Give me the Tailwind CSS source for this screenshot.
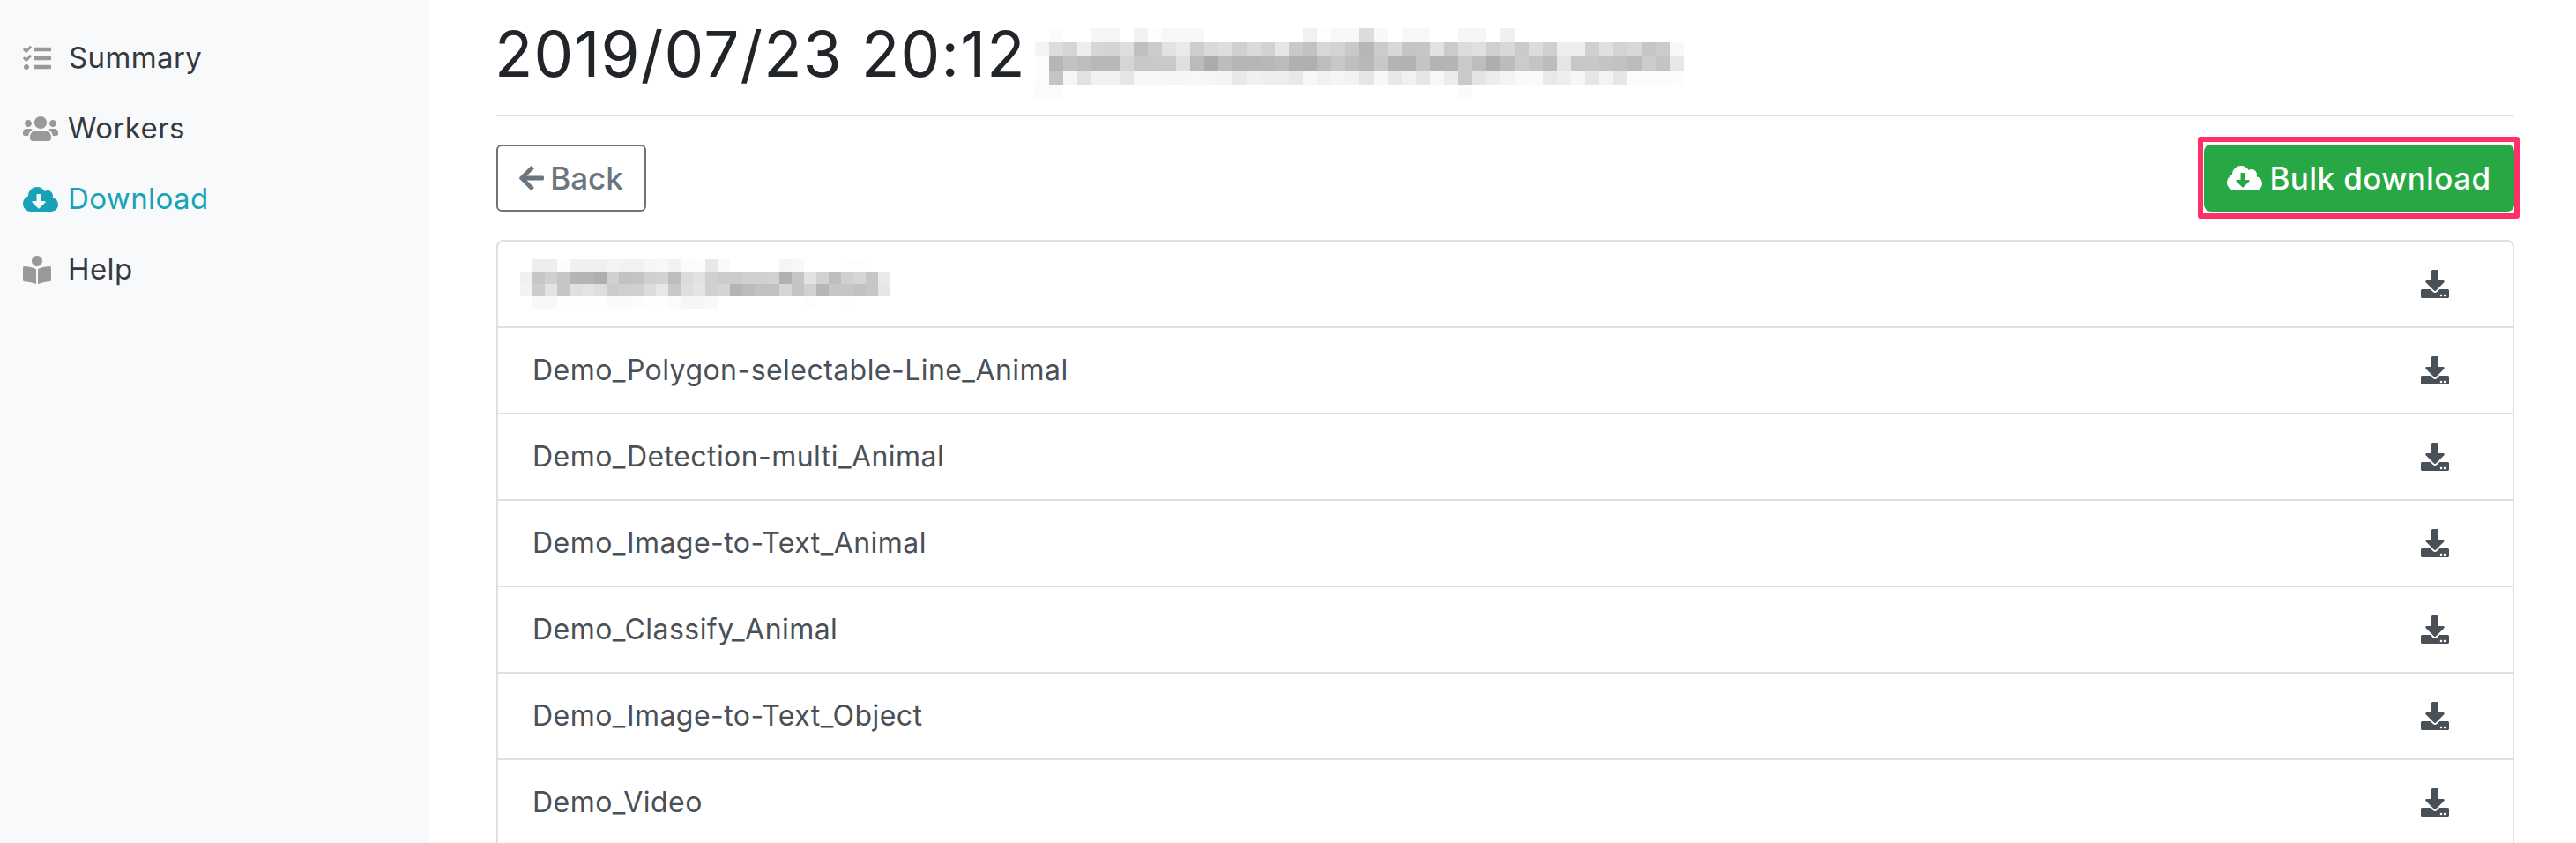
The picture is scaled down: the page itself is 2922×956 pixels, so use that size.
<!DOCTYPE html>
<html>
<head>
<meta charset="utf-8">
<script src="https://cdn.jsdelivr.net/npm/@tailwindcss/browser@4"></script>
</head>
<body class="bg-white font-['Inter','Liberation_Sans',sans-serif]">
<div class="flex h-[956px] w-[2922px] overflow-hidden">
  <aside class="w-[485px] shrink-0 bg-[#f8f9fa] shadow-[1px_0_4px_rgba(0,0,0,0.04)] pt-[26px] pl-[26px] text-[33px] tracking-[0.4px] text-[#343a40]">
    <a class="flex h-[80px] items-center gap-[20px]">
      <span class="flex w-[32px] justify-start"><svg class="w-[32px] h-[32px] fill-[#999]" viewBox="0 0 512 512"><path d="M208 132h288c8.8 0 16-7.2 16-16V76c0-8.8-7.2-16-16-16H208c-8.8 0-16 7.2-16 16v40c0 8.8 7.2 16 16 16zm0 160h288c8.8 0 16-7.2 16-16v-40c0-8.8-7.2-16-16-16H208c-8.8 0-16 7.2-16 16v40c0 8.8 7.2 16 16 16zm0 160h288c8.8 0 16-7.2 16-16v-40c0-8.8-7.2-16-16-16H208c-8.8 0-16 7.2-16 16v40c0 8.8 7.2 16 16 16zM64 368c-26.5 0-48.6 21.5-48.6 48s22.1 48 48.6 48 48-21.5 48-48-21.5-48-48-48zm92.5-299l-72.2 72.2-15.6 15.6c-4.7 4.7-12.9 4.7-17.6 0L3.5 109.4c-4.7-4.7-4.7-12.3 0-17l15.7-15.7c4.7-4.7 12.3-4.7 17 0l22.7 22.1 63.7-63.3c4.7-4.7 12.3-4.7 17 0l17 16.5c4.6 4.7 4.6 12.3-.1 17zm0 159.6l-72.2 72.2-15.7 15.7c-4.7 4.7-12.9 4.7-17.6 0L3.5 269c-4.7-4.7-4.7-12.3 0-17l15.7-15.7c4.7-4.7 12.3-4.7 17 0l22.7 22.1 63.7-63.7c4.7-4.7 12.3-4.7 17 0l17 17c4.6 4.6 4.6 12.2-.1 16.9z"/></svg></span>
      <span>Summary</span>
    </a>
    <a class="flex h-[80px] items-center gap-[11px]">
      <svg class="w-[40px] h-[32px] fill-[#999]" viewBox="0 0 640 512"><path d="M96 224c35.3 0 64-28.7 64-64s-28.7-64-64-64-64 28.7-64 64 28.7 64 64 64zm448 0c35.3 0 64-28.7 64-64s-28.7-64-64-64-64 28.7-64 64 28.7 64 64 64zm32 32h-64c-17.6 0-33.5 7.1-45.1 18.6 40.3 22.1 68.9 62 75.1 109.4h66c17.7 0 32-14.3 32-32v-32c0-35.3-28.7-64-64-64zm-256 0c61.9 0 112-50.1 112-112S381.9 32 320 32 208 82.1 208 144s50.1 112 112 112zm76.8 32h-8.3c-20.8 10-43.9 16-68.5 16s-47.6-6-68.5-16h-8.3C179.6 288 128 339.6 128 403.2V432c0 26.5 21.5 48 48 48h288c26.5 0 48-21.5 48-48v-28.8c0-63.6-51.6-115.2-115.2-115.2zm-223.7-13.4C161.5 263.1 145.6 256 128 256H64c-35.3 0-64 28.7-64 64v32c0 17.7 14.3 32 32 32h65.9c6.3-47.4 34.9-87.3 75.2-109.4z"/></svg>
      <span>Workers</span>
    </a>
    <a class="flex h-[80px] items-center gap-[11px] text-[#17a2b8]">
      <svg class="w-[40px] h-[32px] fill-[#17a2b8]" viewBox="0 0 640 512"><path d="M537.6 226.6c4.1-10.7 6.4-22.4 6.4-34.6 0-53-43-96-96-96-19.7 0-38.1 6-53.3 16.2C367 64.2 315.3 32 256 32c-88.4 0-160 71.6-160 160 0 2.7.1 5.4.2 8.1C40.2 219.8 0 273.2 0 336c0 79.5 64.5 144 144 144h368c70.7 0 128-57.3 128-128 0-61.9-44-113.6-102.4-125.4zm-132.9 88.7L299.3 420.7c-6.2 6.2-16.4 6.2-22.6 0L171.3 315.3c-10.1-10.1-2.9-27.3 11.3-27.3H248V176c0-8.8 7.2-16 16-16h48c8.8 0 16 7.2 16 16v112h65.4c14.2 0 21.4 17.2 11.3 27.3z"/></svg>
      <span>Download</span>
    </a>
    <a class="flex h-[80px] items-center gap-[19px]">
      <svg class="w-[32px] h-[32px] fill-[#999]" viewBox="0 0 512 512"><path d="M352 96c0-53.02-42.98-96-96-96s-96 42.98-96 96 42.98 96 96 96 96-42.98 96-96zM233.59 241.1c-59.33-36.32-155.43-46.3-203.79-49.05C13.55 191.13 0 203.51 0 219.14v222.8c0 14.33 11.59 26.28 26.49 27.05 43.66 2.29 131.99 10.68 193.04 41.43 9.37 4.72 20.48-1.71 20.48-11.87V252.56c-.01-4.67-2.32-8.95-6.42-11.46zm248.61-49.05c-48.35 2.74-144.46 12.73-203.78 49.05-4.1 2.51-6.41 6.96-6.41 11.63v245.79c0 10.19 11.14 16.63 20.54 11.9 61.04-30.72 149.32-39.11 192.97-41.4 14.9-.78 26.49-12.73 26.49-27.06V219.14c-.01-15.63-13.56-28.01-29.81-27.09z"/></svg>
      <span>Help</span>
    </a>
  </aside>
  <main class="ml-[78px] w-[2289px] shrink-0">
    <header class="flex h-[132px] items-start border-b-2 border-[#dee2e6]">
      <h1 class="mt-[19px] h-[84px] -ml-[2px] text-[71px] leading-[84px] tracking-[1.2px] font-normal text-[#212529]">2019/07/23 20:12</h1>
      <svg id="m1" class="mt-[32px] ml-[10px]" width="752" height="80" shape-rendering="crispEdges"></svg>
    </header>
    <div class="flex items-start justify-between mt-[32px]">
      <button class="flex h-[76px] w-[170px] items-center justify-center gap-[7px] rounded-[6px] border-2 border-[#6c757d] bg-white text-[35px] font-medium text-[#6c757d]">
        <svg class="w-[28px] h-[32px] fill-[#6c757d]" viewBox="0 0 448 512"><path d="M257.5 445.1l-22.2 22.2c-9.4 9.4-24.6 9.4-33.9 0L7 273c-9.4-9.4-9.4-24.6 0-33.9L201.4 44.7c9.4-9.4 24.6-9.4 33.9 0l22.2 22.2c9.5 9.5 9.3 25-.4 34.3L136.6 216H424c13.3 0 24 10.7 24 24v32c0 13.3-10.7 24-24 24H136.6l120.5 114.8c9.8 9.3 10 24.8.4 34.3z"/></svg>
        <span>Back</span>
      </button>
      <button class="relative flex h-[76px] w-[352px] items-center justify-center gap-[8px] rounded-[8px] bg-[#28a745] text-[35px] font-medium tracking-[0.4px] text-white">
        <svg class="w-[40px] h-[32px] fill-white" viewBox="0 0 640 512"><path d="M537.6 226.6c4.1-10.7 6.4-22.4 6.4-34.6 0-53-43-96-96-96-19.7 0-38.1 6-53.3 16.2C367 64.2 315.3 32 256 32c-88.4 0-160 71.6-160 160 0 2.7.1 5.4.2 8.1C40.2 219.8 0 273.2 0 336c0 79.5 64.5 144 144 144h368c70.7 0 128-57.3 128-128 0-61.9-44-113.6-102.4-125.4zm-132.9 88.7L299.3 420.7c-6.2 6.2-16.4 6.2-22.6 0L171.3 315.3c-10.1-10.1-2.9-27.3 11.3-27.3H248V176c0-8.8 7.2-16 16-16h48c8.8 0 16 7.2 16 16v112h65.4c14.2 0 21.4 17.2 11.3 27.3z"/></svg>
        <span>Bulk download</span>
        <span class="absolute top-[-9px] bottom-[-8px] left-[-7px] right-[-6px] rounded-[3px] border-[6px] border-[#ff3069]"></span>
      </button>
    </div>
    <ul class="mt-[32px] rounded-t-[8px] border-2 border-[#dfdfdf] text-[32px] leading-[46px] tracking-[0.45px] text-[#495057]">
      <li class="flex h-[96px] items-center justify-between pl-[39px] pr-[72px]">
        <svg id="m2" class="-ml-[14px]" width="420" height="56" shape-rendering="crispEdges"></svg>
        <svg class="w-[32px] h-[32px] fill-[#495057]" viewBox="0 0 512 512"><use href="#dl"/></svg>
      </li>
      <li class="flex h-[98px] items-center justify-between border-t-2 border-[#dfdfdf] pl-[39px] pr-[72px]"><span>Demo_Polygon-selectable-Line_Animal</span><svg class="w-[32px] h-[32px] fill-[#495057]" viewBox="0 0 512 512"><use href="#dl"/></svg></li>
      <li class="flex h-[98px] items-center justify-between border-t-2 border-[#dfdfdf] pl-[39px] pr-[72px]"><span>Demo_Detection-multi_Animal</span><svg class="w-[32px] h-[32px] fill-[#495057]" viewBox="0 0 512 512"><use href="#dl"/></svg></li>
      <li class="flex h-[98px] items-center justify-between border-t-2 border-[#dfdfdf] pl-[39px] pr-[72px]"><span>Demo_Image-to-Text_Animal</span><svg class="w-[32px] h-[32px] fill-[#495057]" viewBox="0 0 512 512"><use href="#dl"/></svg></li>
      <li class="flex h-[98px] items-center justify-between border-t-2 border-[#dfdfdf] pl-[39px] pr-[72px]"><span>Demo_Classify_Animal</span><svg class="w-[32px] h-[32px] fill-[#495057]" viewBox="0 0 512 512"><use href="#dl"/></svg></li>
      <li class="flex h-[98px] items-center justify-between border-t-2 border-[#dfdfdf] pl-[39px] pr-[72px]"><span>Demo_Image-to-Text_Object</span><svg class="w-[32px] h-[32px] fill-[#495057]" viewBox="0 0 512 512"><use href="#dl"/></svg></li>
      <li class="flex h-[98px] items-center justify-between border-t-2 border-[#dfdfdf] pl-[39px] pr-[72px]"><span>Demo_Video</span><svg class="w-[32px] h-[32px] fill-[#495057]" viewBox="0 0 512 512"><use href="#dl"/></svg></li>
    </ul>
  </main>
</div>
<svg class="hidden"><symbol id="dl" viewBox="0 0 512 512"><path d="M216 0h80c13.3 0 24 10.7 24 24v168h87.7c17.8 0 26.7 21.5 14.1 34.1L269.7 378.3c-7.5 7.5-19.8 7.5-27.3 0L90.1 226.1c-12.6-12.6-3.7-34.1 14.1-34.1H192V24c0-13.3 10.7-24 24-24zm296 376v112c0 13.3-10.7 24-24 24H24c-13.3 0-24-10.7-24-24V376c0-13.3 10.7-24 24-24h146.7l49 49c20.1 20.1 52.5 20.1 72.6 0l49-49H488c13.3 0 24 10.7 24 24zm-124 88c0-11-9-20-20-20s-20 9-20 20 9 20 20 20 20-9 20-20zm64 0c0-11-9-20-20-20s-20 9-20 20 9 20 20 20 20-9 20-20z"/></symbol></svg>
<script>
function mosaic(id, size, rows){
  var svg=document.getElementById(id), out='';
  rows.forEach(function(r,y){
    r.split(' ').forEach(function(g,x){
      if(g!=='ff') out+='<rect x="'+x*size+'" y="'+y*size+'" width="'+size+'" height="'+size+'" fill="#'+g+g+g+'"/>';
    });
  });
  svg.innerHTML=out;
}
mosaic('m1',16,[
 'ff fb ff ff f6 f6 ff f2 fd f7 f7 f7 ff ff ff ff ff ff ff f1 fd f8 f8 dc f8 ff f8 f8 ff ff f6 f6 ff f0 ff ff ff ff ff ff ff ff ff ff ff ff',
 'f4 dc d5 ee d6 d4 de c0 cb e2 ea cd d9 de d0 da d2 e6 c9 c2 d7 d3 c8 b6 cb d8 c4 c6 e2 cb dc e0 cf d8 ca dc d0 ed ee d0 e0 d3 d8 c6 cb f8',
 'fc b6 c2 bd b8 b8 d5 c8 c9 c9 e0 bb ab bc b6 b6 b8 bc b0 af bd c8 be b8 c8 b4 b2 c4 b4 b4 ca bd ae bc cb c4 bc e5 c7 c8 c4 c2 bc cc c4 e8',
 'fc c4 f6 e2 f1 f1 e6 f7 f8 f6 f6 f7 f6 f4 e8 f0 ee ee e8 f8 f1 f5 f2 e6 f8 e8 f1 e6 f7 ec c9 e4 ec f3 f9 fa e9 ee f6 e6 f3 e6 fb fb fb fc',
 'fb fb ff ff ff ff ff ff ff ff ff ff ff ff ff ff ff ff ff ff ff ff ff ff ff ff ff ff ff ff fa ff ff ff ff ff ff ff ff ff ff ff ff ff ff ff'
]);
mosaic('m2',14,[
 'ff ee ee fc f0 f0 ef f4 f2 f1 f6 f8 f2 fb fc e8 f9 ff ff ff ff f5 f8 ff ff ff fd fd ff ff',
 'f0 c6 d0 c5 b5 b4 ae d0 c2 c4 d0 d2 bd dc e2 cf cb cb cf d0 d2 b0 c5 e2 d2 be d0 d6 c6 ea',
 'f2 cc e3 c6 e0 e3 de cb cf d0 dc e7 c8 de e4 d0 d4 b4 bc c1 c1 d6 c4 d1 b6 c6 c6 c2 c6 e6',
 'ff f8 f8 fe fe fe fe fa fa fc fe fe fb f6 f6 f9 ff ff ff ff ff ff ff fd ff ff fe ff ff ff'
]);
</script>
</body>
</html>
